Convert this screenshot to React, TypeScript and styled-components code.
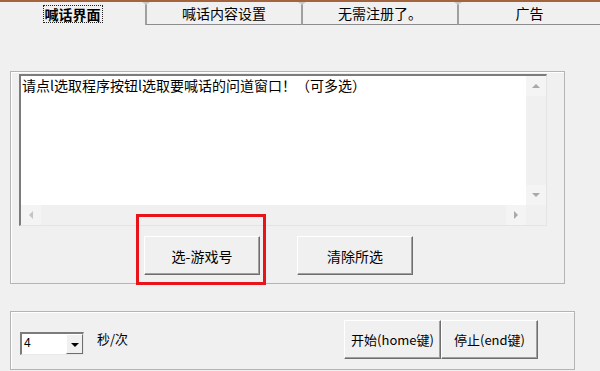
import React from "react";
import styled, { createGlobalStyle } from "styled-components";

const GlobalStyle = createGlobalStyle`
  html, body {
    margin: 0;
    padding: 0;
    background: #f0f0f0;
  }
  body {
    font-family: "Noto Sans CJK SC", "Noto Sans", sans-serif;
    color: #000;
  }
`;

const Window = styled.div`
  width: 600px;
  height: 371px;
  overflow: hidden;
  background: #f0f0f0;
  position: relative;
`;

const TopLine = styled.div`
  height: 2px;
  background: #a4643e;
`;

const TabBar = styled.div`
  display: flex;
  height: 23px;
`;

const Tab = styled.div<{ $w: number; $active?: boolean }>`
  width: ${(p) => p.$w}px;
  flex: none;
  display: flex;
  align-items: center;
  justify-content: center;
  font-size: 14px;
  line-height: 16px;
  font-weight: ${(p) => (p.$active ? 700 : 400)};
  box-sizing: border-box;
  border-bottom: ${(p) => (p.$active ? "none" : "1px solid #8c8c8c")};
  border-left: ${(p) => (p.$active ? "none" : "2px solid #a0a0a0")};
  position: relative;
  &:before {
    content: "";
    display: ${(p) => (p.$active ? "none" : "block")};
    position: absolute;
    left: -5px;
    top: 0;
    border-left: 4px solid transparent;
    border-right: 4px solid transparent;
    border-top: 3px solid #c8c8c8;
  }
`;

const FocusLabel = styled.span`
  outline: 1px dotted #222;
  padding: 0 1px;
`;

const Body = styled.div`
  padding: 46px 0 0 10px;
`;

const Group = styled.div<{ $w: number; $h: number }>`
  width: ${(p) => p.$w}px;
  height: ${(p) => p.$h}px;
  box-sizing: border-box;
  border: 1px solid #b4b4b4;
  box-shadow: inset 1px 1px #ffffff;
  position: relative;
`;

const TextBox = styled.div`
  margin: 2px 0 0 8px;
  width: 528px;
  height: 152px;
  box-sizing: border-box;
  border-top: 2px solid #7c7c7c;
  border-left: 2px solid #7c7c7c;
  border-bottom: 1px solid #e4e4e4;
  border-right: 1px solid #e4e4e4;
  background: #fff;
  display: grid;
  grid-template-columns: 1fr 20px;
  grid-template-rows: 1fr 20px;
`;

const TextArea = styled.div`
  padding: 1px 1px;
  font-size: 14px;
  line-height: 17px;
  white-space: nowrap;
  overflow: hidden;
`;

const ScrollTrack = styled.div<{ $dir: "v" | "h" }>`
  background: #f0f0f0;
  display: flex;
  flex-direction: ${(p) => (p.$dir === "v" ? "column" : "row")};
  justify-content: space-between;
  align-items: center;
`;

const Corner = styled.div`
  background: #f0f0f0;
`;

const Arrow = styled.div<{ $d: "up" | "down" | "left" | "right" }>`
  width: 20px;
  height: 20px;
  display: flex;
  align-items: center;
  justify-content: center;
  background: #f4f4f4;
  &:after {
    content: "";
    width: 0;
    height: 0;
    ${(p) =>
      p.$d === "up"
        ? "border-left: 4px solid transparent; border-right: 4px solid transparent; border-bottom: 4px solid #a8a8a8;"
        : p.$d === "down"
        ? "border-left: 4px solid transparent; border-right: 4px solid transparent; border-top: 4px solid #a8a8a8;"
        : p.$d === "left"
        ? "border-top: 4px solid transparent; border-bottom: 4px solid transparent; border-right: 4px solid #c4c4c4;"
        : "border-top: 4px solid transparent; border-bottom: 4px solid transparent; border-left: 4px solid #a8a8a8;"}
  }
`;

const ButtonRow = styled.div`
  display: flex;
  gap: 37px;
  margin: 10px 0 0 133px;
`;

// red annotation frame drawn over the first button
const Highlight = styled.div`
  position: relative;
  &:before {
    content: "";
    position: absolute;
    left: -8px;
    top: -22px;
    width: 130px;
    height: 71px;
    box-sizing: border-box;
    border: 3px solid #e8141a;
    pointer-events: none;
  }
`;

const Button = styled.button<{ $w: number; $h: number }>`
  width: ${(p) => p.$w}px;
  height: ${(p) => p.$h}px;
  box-sizing: border-box;
  background: #f0f0f0;
  border: 1px solid;
  border-color: #ffffff #6e6e6e #6e6e6e #ffffff;
  box-shadow: inset -1px -1px #a0a0a0;
  font-family: "Noto Sans CJK SC", "Noto Sans", sans-serif;
  font-size: 14px;
  color: #000;
  padding: 0;
  display: flex;
  align-items: center;
  justify-content: center;
  white-space: nowrap;
`;

const BottomBody = styled.div`
  padding: 27px 0 0 10px;
`;

const BottomRow = styled.div`
  display: flex;
  align-items: center;
  height: 100%;
  padding: 0 0 0 9px;
  box-sizing: border-box;
`;

const Combo = styled.div`
  width: 64px;
  height: 23px;
  box-sizing: border-box;
  border-top: 2px solid #7c7c7c;
  border-left: 2px solid #7c7c7c;
  border-bottom: 1px solid #e8e8e8;
  border-right: 1px solid #e8e8e8;
  background: #fff;
  display: flex;
  margin-top: 5px;
`;

const ComboValue = styled.div`
  flex: 1;
  font-family: "Liberation Sans", sans-serif;
  font-size: 12px;
  line-height: 19px;
  padding-left: 2px;
`;

const ComboDrop = styled.div`
  width: 17px;
  background: #f0f0f0;
  border: 1px solid;
  border-color: #ffffff #6e6e6e #6e6e6e #ffffff;
  box-sizing: border-box;
  display: flex;
  align-items: center;
  justify-content: center;
  &:after {
    content: "";
    border-left: 4px solid transparent;
    border-right: 4px solid transparent;
    border-top: 4px solid #000;
    margin-top: 2px;
  }
`;

const Unit = styled.span`
  font-size: 13px;
  margin: 0 0 4px 13px;
`;

const Actions = styled.div`
  display: flex;
  margin: 0 0 2px auto;
  padding-right: 36px;
`;

const SmallButton = styled(Button)`
  font-size: 13px;
  letter-spacing: 0;
`;

export default function App() {
  return (
    <>
      <GlobalStyle />
      <Window>
        <TopLine />
        <TabBar>
          <Tab $w={145} $active>
            <FocusLabel>喊话界面</FocusLabel>
          </Tab>
          <Tab $w={156}>喊话内容设置</Tab>
          <Tab $w={156}>无需注册了。</Tab>
          <Tab $w={143}>广告</Tab>
        </TabBar>
        <Body>
          <Group $w={555} $h={213}>
            <TextBox>
              <TextArea>请点l选取程序按钮l选取要喊话的问道窗口！（可多选）</TextArea>
              <ScrollTrack $dir="v">
                <Arrow $d="up" />
                <Arrow $d="down" />
              </ScrollTrack>
              <ScrollTrack $dir="h">
                <Arrow $d="left" />
                <Arrow $d="right" />
              </ScrollTrack>
              <Corner />
            </TextBox>
            <ButtonRow>
              <Highlight>
                <Button $w={116} $h={39}>选-游戏号</Button>
              </Highlight>
              <Button $w={116} $h={39}>清除所选</Button>
            </ButtonRow>
          </Group>
        </Body>
        <BottomBody>
          <Group $w={565} $h={59}>
            <BottomRow>
              <Combo>
                <ComboValue>4</ComboValue>
                <ComboDrop />
              </Combo>
              <Unit>秒/次</Unit>
              <Actions>
                <SmallButton $w={97} $h={39}>开始(home键)</SmallButton>
                <SmallButton $w={97} $h={39}>停止(end键)</SmallButton>
              </Actions>
            </BottomRow>
          </Group>
        </BottomBody>
      </Window>
    </>
  );
}
